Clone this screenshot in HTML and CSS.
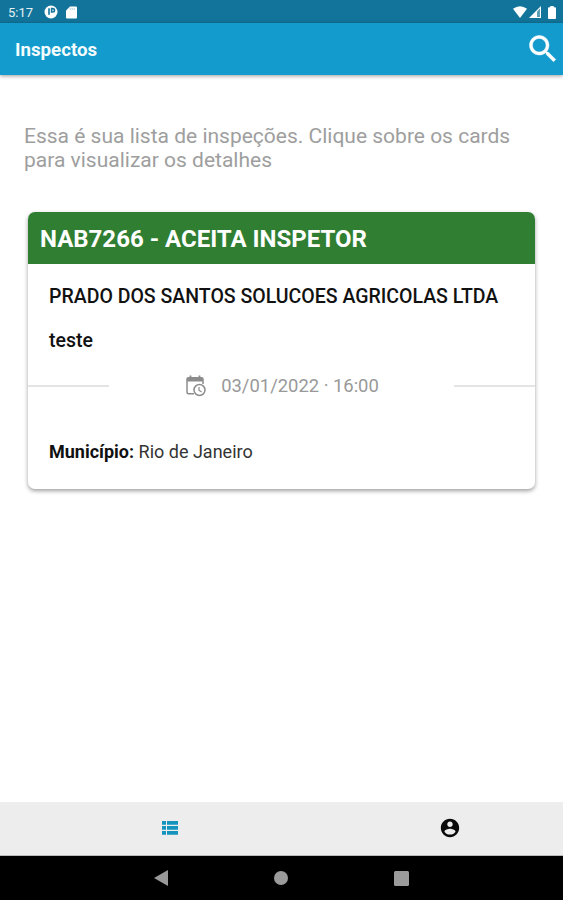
FILE: index.html
```html
<!DOCTYPE html>
<html lang="pt-BR">
<head>
<meta charset="utf-8">
<title>Inspectos</title>
<link rel="stylesheet" href="styles.css">
</head>
<body>
<div class="screen">
  <div class="status">
    <span class="clock">5:17</span>
    <svg class="st-app" width="14" height="14" viewBox="0 0 14 14"><circle cx="7" cy="7" r="6.5" fill="#fff"/><path d="M5 3.2v6.6M7.6 3.6h1.2a1.7 1.7 0 0 1 0 3.4H7.6z" fill="none" stroke="#12749a" stroke-width="1.6"/></svg>
    <svg class="st-sd" width="11" height="13" viewBox="0 0 11 13"><path d="M4 .5h6q1 0 1 1v10q0 1-1 1H1q-1 0-1-1v-7z" fill="#fff"/><path d="M4.200 2v2M6.200 2v2M8.200 2v2" stroke="#8fbfd2" stroke-width=".7"/></svg>
    <div class="system">
      <svg width="14" height="12" viewBox="0 0 14 12"><path d="M0 2.800Q7-2.200 14 2.800L7 12z" fill="#fff"/></svg>
      <svg width="12" height="12" viewBox="0 0 12 12"><path d="M0 12 12 0v12z" fill="#fff"/><path d="M8 5.500 11 2.500V11H8z" fill="#5d9fb8"/></svg>
      <svg class="battery" width="8" height="13" viewBox="0 0 8 13"><path d="M2.300 0h3.400v1.300H7q1 0 1 1V12q0 1-1 1H1q-1 0-1-1V2.300q0-1 1-1h1.300z" fill="#fff"/></svg>
    </div>
  </div>
  <header class="appbar">
    <h1>Inspectos</h1>
    <svg class="search" width="36" height="36" viewBox="0 0 24 24"><path fill="#fff" stroke="#fff" stroke-width=".3" d="M15.500 14h-.79l-.28-.27C15.410 12.590 16 11.110 16 9.500 16 5.910 13.090 3 9.500 3S3 5.910 3 9.500 5.910 16 9.500 16c1.610 0 3.090-.59 4.230-1.570l.27.28v.79l5 4.990L20.490 19l-4.990-5zm-6 0C7.010 14 5 11.990 5 9.500S7.010 5 9.500 5 14 7.010 14 9.500 11.990 14 9.500 14z"/></svg>
  </header>
  <main>
    <p class="intro">Essa é sua lista de inspeções. Clique sobre os cards<br>para visualizar os detalhes</p>
    <article class="card">
      <h2>NAB7266 - ACEITA INSPETOR</h2>
      <p class="company">PRADO DOS SANTOS SOLUCOES AGRICOLAS LTDA</p>
      <p class="name">teste</p>
      <div class="when">
        <i class="rule"></i>
        <div class="date">
          <svg width="20" height="22" viewBox="0 0 20 22" fill="none" stroke="#8c8c8c"><path d="M8 18.800H2.500q-1.500 0-1.500-1.500V4q0-1.200 1.500-1.200h13Q17 2.800 17 4v5" stroke-width="1.500"/><path d="M1 4.800h16" stroke-width="3.600"/><path d="M4.500.5v3M13.500.5v3" stroke-width="1.800"/><circle cx="13.500" cy="15" r="5.500" fill="#fff" stroke-width="1.500"/><path d="M13 12v3.300l2.600 1.800" stroke-width="1.200"/></svg>
          <span>03/01/2022 · 16:00</span>
        </div>
        <i class="rule"></i>
      </div>
      <p class="city"><b>Município:</b> <span>Rio de Janeiro</span></p>
    </article>
  </main>
  <nav class="tabs">
    <svg class="list" width="16" height="14" viewBox="0 0 16 14" fill="#1594bd"><path d="M0 0h4v3.800H0zM5 0h11v3.800H5zM0 5h4v3.800H0zM5 5h11v3.800H5zM0 10h4v3.800H0zM5 10h11v3.800H5z"/></svg>
    <svg class="user" width="22" height="22" viewBox="0 0 24 24"><path fill="#0b0b0b" d="M12 2C6.480 2 2 6.480 2 12s4.480 10 10 10 10-4.480 10-10S17.520 2 12 2zm0 3c1.660 0 3 1.340 3 3s-1.340 3-3 3-3-1.340-3-3 1.340-3 3-3zm0 14.200c-2.500 0-4.710-1.280-6-3.220.03-1.990 4-3.080 6-3.080 1.990 0 5.970 1.090 6 3.080-1.290 1.940-3.500 3.220-6 3.220z"/></svg>
  </nav>
  <div class="system-nav">
    <svg width="14" height="16" viewBox="0 0 14 16"><path d="M0 8 14 0v16z" fill="#999"/></svg>
    <svg width="14" height="14" viewBox="0 0 14 14"><circle cx="7" cy="7" r="7" fill="#9b9b9b"/></svg>
    <svg width="15" height="15" viewBox="0 0 15 15"><rect width="15" height="15" rx="1.500" fill="#9b9b9b"/></svg>
  </div>
</div>
</body>
</html>
```
FILE: styles.css
```css
* { box-sizing: border-box; margin: 0; padding: 0; }
body { background: #fff; font-family: Roboto, sans-serif; }
svg { display: block; flex: none; }
.screen { width: 563px; height: 900px; display: flex; flex-direction: column; overflow: hidden; white-space: nowrap; }
.status { height: 23px; background: #12749a; display: flex; align-items: center; padding: 1px 7px 0 8px; color: #e4f0f5; }
.clock { font-size: 13px; font-weight: 400; width: 36px; }
.st-sd { margin-left: 8px; }
.system { margin-left: auto; display: flex; align-items: center; gap: 2px; }
.battery { margin-left: 5px; }
.appbar { height: 52px; background: #129bcc; display: flex; align-items: center; justify-content: space-between; padding: 0 2px 0 15px; box-shadow: 0 1px 4px rgba(0,0,0,.4); }
.appbar h1 { padding-top: 2px; font-size: 18.700px; font-weight: 700; color: #f4fbfd; }
main { flex: 1; padding: 49px 28px 0; }
.intro { margin-left: -4px; font-size: 21px; line-height: 24px; color: #9e9e9e; }
.card { margin-top: 40px; height: 277px; border-radius: 7px; background: #fff; overflow: hidden; box-shadow: 0 2px 4px rgba(0,0,0,.38); }
.card h2 { height: 52px; line-height: 54px; padding-left: 12px; background: #2f7e32; color: #fff; font-size: 24px; font-weight: 700; }
.company, .name { padding-left: 21px; font-size: 19.500px; font-weight: 500; line-height: 24px; color: #111; }
.company { margin-top: 21px; }
.name { margin-top: 20px; }
.when { margin-top: 21px; height: 24px; display: flex; align-items: center; justify-content: space-between; }
.rule { width: 81px; height: 2px; background: #e4e4e4; }
.date { display: flex; align-items: center; gap: 15px; padding-left: 2px; font-size: 18.400px; color: #999; }
.date span { padding-bottom: 2px; }
.city { margin-top: 42px; padding-left: 21px; font-size: 18px; line-height: 24px; color: #333; }
.city b { font-weight: 700; color: #111; }
.tabs { height: 54px; background: #ededed; border-bottom: 1px solid #bbb; display: flex; align-items: center; padding: 0 102px 2px 162px; justify-content: space-between; }
.system-nav { height: 44px; background: #000; display: flex; align-items: center; justify-content: space-between; padding: 0 154px; }
```
